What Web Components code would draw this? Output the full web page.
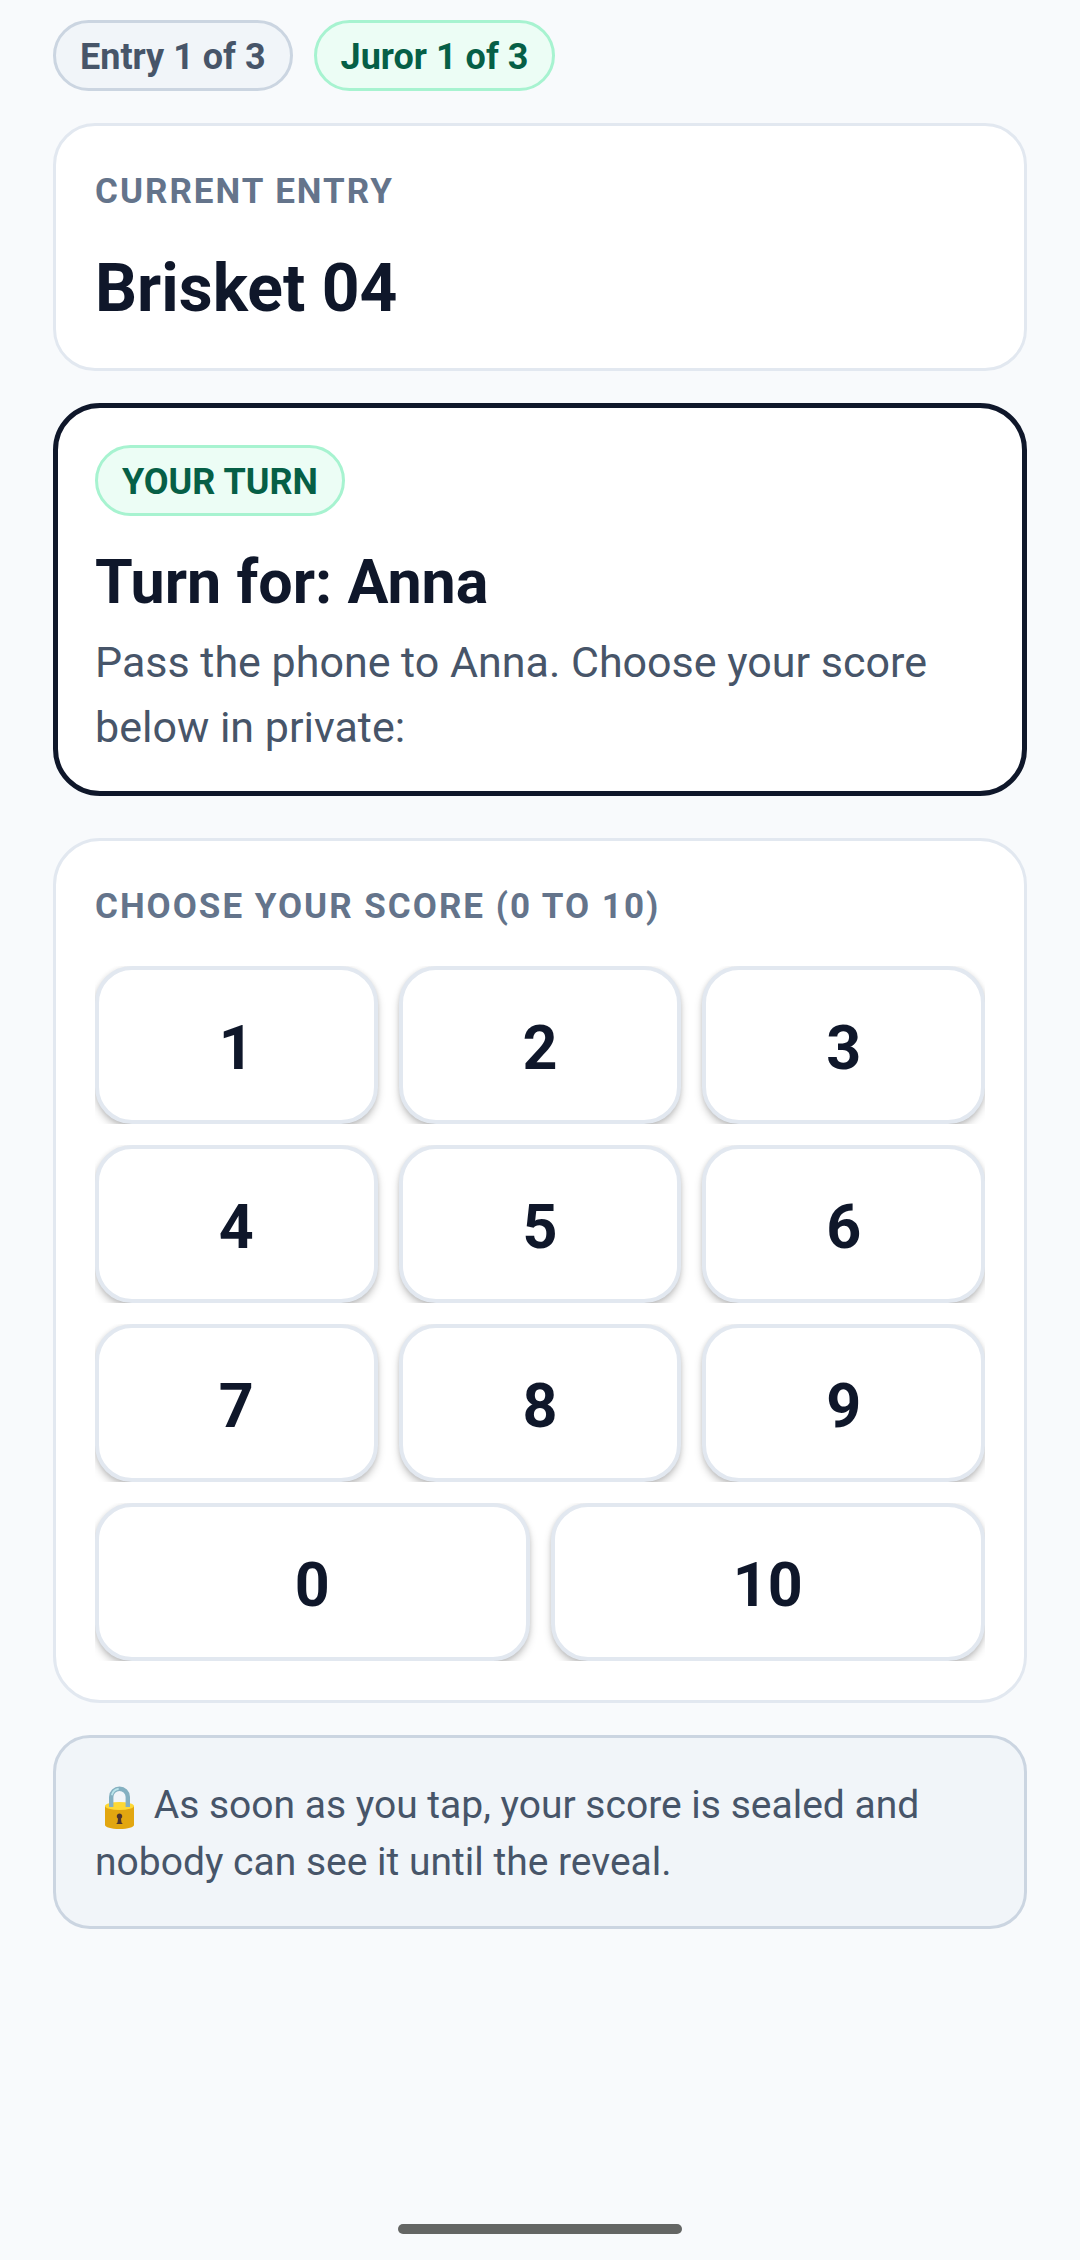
<!DOCTYPE html>
<html lang="en">
<head>
<meta charset="utf-8">
<meta name="viewport" content="width=device-width, initial-scale=1">
<title>Choose your score</title>
<style>
  :root {
    --ink: #0f172a;
    --body: #475569;
    --muted: #64748b;
    --line: #e2e8f0;
    --line-strong: #cbd5e1;
    --surface: #ffffff;
    --surface-soft: #f1f5f9;
    --gap: 21px;
  }

  body {
    margin: 0;
    background: #f8fafc;
    color: var(--ink);
    font-family: Roboto, "Liberation Sans", sans-serif;
  }
</style>
</head>
<body>
<jury-screen>
  <status-pill slot="status">Entry 1 of 3</status-pill>
  <status-pill slot="status" tone="green">Juror 1 of 3</status-pill>

  <jury-card label="Current entry">
    <entry-title>Brisket 04</entry-title>
  </jury-card>

  <turn-card badge="YOUR TURN" heading="Turn for: Anna">Pass the phone to Anna. Choose your score below in private:</turn-card>

  <jury-card large label="Choose your score (0 to 10)">
    <score-pad></score-pad>
  </jury-card>

  <seal-note>As soon as you tap, your score is sealed and nobody can see it until the reveal.</seal-note>
</jury-screen>

<script>
"use strict";

(function () {
  class JuryScreen extends HTMLElement {
    constructor() {
      super();
      this.attachShadow({ mode: "open" }).innerHTML = `
        <style>
          :host {
            display: flex;
            flex-direction: column;
            box-sizing: border-box;
            min-height: 100vh;
            padding: 20px 53px 26px;
          }

          main {
            display: flex;
            flex-direction: column;
            flex: 1;
            gap: 32px;
          }

          .status {
            display: flex;
            flex-wrap: wrap;
            gap: var(--gap);
          }

          .home {
            align-self: center;
            width: 284px;
            height: 10px;
            border-radius: 5px;
            background: #646664;
          }
        </style>
        <main>
          <div class="status"><slot name="status"></slot></div>
          <slot></slot>
        </main>
        <div class="home"></div>
      `;
    }
  }

  class StatusPill extends HTMLElement {
    constructor() {
      super();
      this.attachShadow({ mode: "open" }).innerHTML = `
        <style>
          :host {
            display: inline-block;
            padding: 14px 24px 10px;
            border: 3px solid var(--line-strong);
            border-radius: 36px;
            background: var(--surface-soft);
            color: var(--body);
            font-size: 36px;
            font-weight: 700;
            line-height: 41px;
          }

          :host([tone="green"]) {
            border-color: #a7f3d0;
            background: #ecfdf5;
            color: #065f46;
          }
        </style>
        <slot></slot>
      `;
    }
  }

  class JuryCard extends HTMLElement {
    connectedCallback() {
      this.attachShadow({ mode: "open" }).innerHTML = `
        <style>
          :host {
            display: block;
            padding: 39px;
            border: 3px solid var(--line);
            border-radius: 42px;
            background: var(--surface);
          }

          :host([large]) {
            margin-top: 10px;
            border-radius: 47px;
          }

          h2 {
            margin: 0 0 30px;
            color: var(--muted);
            font-size: 35px;
            font-weight: 700;
            line-height: 54px;
            letter-spacing: 2px;
            text-transform: uppercase;
          }

          :host([large]) h2 {
            margin-bottom: 32px;
          }
        </style>
        <h2></h2>
        <slot></slot>
      `;
      this.shadowRoot.querySelector("h2").textContent = this.getAttribute("label");
    }
  }

  class EntryTitle extends HTMLElement {
    constructor() {
      super();
      this.attachShadow({ mode: "open" }).innerHTML = `
        <style>
          :host {
            display: block;
          }

          h1 {
            margin: 0;
            font-size: 66px;
            font-weight: 700;
            line-height: 80px;
          }
        </style>
        <h1><slot></slot></h1>
      `;
    }
  }

  class TurnCard extends HTMLElement {
    connectedCallback() {
      this.attachShadow({ mode: "open" }).innerHTML = `
        <style>
          :host {
            display: block;
            padding: 37px 37px 31px;
            border: 5px solid var(--ink);
            border-radius: 47px;
            background: var(--surface);
          }

          .badge {
            display: flex;
          }

          h2 {
            margin: 30px 0 12px;
            font-size: 61px;
            font-weight: 700;
            line-height: 72px;
          }

          p {
            margin: 0;
            color: var(--body);
            font-size: 43px;
            line-height: 65px;
          }
        </style>
        <div class="badge"><status-pill tone="green">${this.getAttribute("badge")}</status-pill></div>
        <h2>${this.getAttribute("heading")}</h2>
        <p><slot></slot></p>
      `;
    }
  }

  class ScorePad extends HTMLElement {
    constructor() {
      super();
      this.attachShadow({ mode: "open" }).innerHTML = `
        <style>
          :host {
            display: flex;
            flex-direction: column;
            gap: var(--gap);
          }

          /* each row clips the shadow of its keys */
          .row {
            display: flex;
            gap: var(--gap);
            overflow: hidden;
          }

          button {
            flex: 1;
            height: 158px;
            margin: 0;
            padding: 6px 0 0;
            border: 4px solid var(--line);
            border-radius: 37px;
            background: var(--surface);
            box-shadow: 0 5px 8px -1px rgba(0, 0, 0, 0.26), 0 0 4px rgba(0, 0, 0, 0.08);
            color: var(--ink);
            font: 700 61px/72px Roboto, "Liberation Sans", sans-serif;
            cursor: pointer;
          }

          button:active {
            background: var(--surface-soft);
          }
        </style>
      `;
      this.renderRows([[1, 2, 3], [4, 5, 6], [7, 8, 9], [0, 10]]);
    }

    renderRows(rows) {
      for (const scores of rows) {
        const row = document.createElement("div");
        row.className = "row";
        for (const score of scores) {
          const button = document.createElement("button");
          button.type = "button";
          button.textContent = score;
          button.addEventListener("click", () => {
            this.dispatchEvent(new CustomEvent("score", { detail: score, bubbles: true }));
          });
          row.appendChild(button);
        }
        this.shadowRoot.appendChild(row);
      }
    }
  }

  class SealNote extends HTMLElement {
    constructor() {
      super();
      this.attachShadow({ mode: "open" }).innerHTML = `
        <style>
          :host {
            display: block;
            padding: 39px 39px 35px;
            border: 3px solid var(--line-strong);
            border-radius: 37px;
            background: var(--surface-soft);
          }

          p {
            margin: 0;
            color: var(--body);
            font-size: 39px;
            line-height: 57px;
          }

          svg {
            width: 49px;
            height: 48px;
            margin: -4px 0;
            vertical-align: -10px;
          }
        </style>
        <p><svg viewBox="0 0 49 48" role="img" aria-label="Locked">
          <path d="M10 22v19c0 2 6 4 14.500 4s14.500-2 14.500-4V22z" fill="#e2a610"/>
          <ellipse cx="24.500" cy="22" rx="14.500" ry="4" fill="#fdd835"/>
          <path d="M16.200 23V13a8.300 8.300 0 0 1 16.600 0V23" fill="none" stroke="#84b0c1" stroke-width="4.400"/>
          <path d="M17 10.500c1-3 3-5 6-5.500" fill="none" stroke="#b9e4ea" stroke-width="1.800" stroke-linecap="round"/>
          <path d="M24.500 29.500a2.900 2.900 0 0 1 1.500 5.300l.500 3.700 1.300 1.500h-6.600l1.300-1.500.500-3.700a2.900 2.900 0 0 1 1.500-5.300z" fill="#4e342e"/>
        </svg> <slot></slot></p>
      `;
    }
  }

  customElements.define("jury-screen", JuryScreen);
  customElements.define("status-pill", StatusPill);
  customElements.define("jury-card", JuryCard);
  customElements.define("entry-title", EntryTitle);
  customElements.define("turn-card", TurnCard);
  customElements.define("score-pad", ScorePad);
  customElements.define("seal-note", SealNote);
})();
</script>
</body>
</html>
